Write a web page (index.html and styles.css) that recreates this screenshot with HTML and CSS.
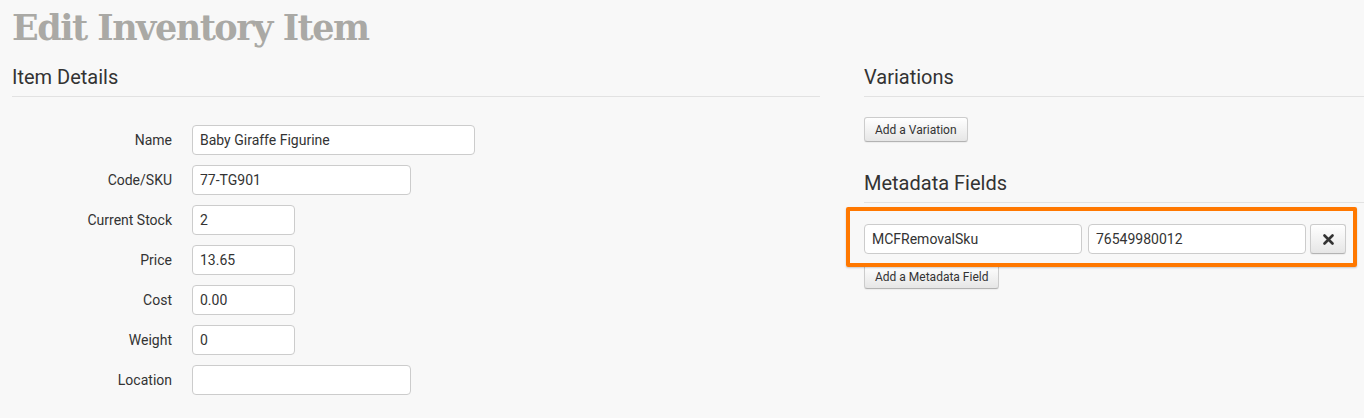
FILE: index.html
```html
<!DOCTYPE html>
<html lang="en">
<head>
<meta charset="UTF-8">
<title>Edit Inventory Item</title>
<link rel="stylesheet" href="styles.css">
</head>
<body>

<h1 class="page-title">Edit Inventory Item</h1>

<div class="columns">
    <!-- Item details -->
    <div class="col">
        <h3 class="section-header">Item Details</h3>
        <div class="form">
            <div class="form-row">
                <label>Name</label>
                <input type="text" class="input w-lg" value="Baby Giraffe Figurine">
            </div>
            <div class="form-row">
                <label>Code/SKU</label>
                <input type="text" class="input w-md" value="77-TG901">
            </div>
            <div class="form-row">
                <label>Current Stock</label>
                <input type="text" class="input w-sm" value="2">
            </div>
            <div class="form-row">
                <label>Price</label>
                <input type="text" class="input w-sm" value="13.65">
            </div>
            <div class="form-row">
                <label>Cost</label>
                <input type="text" class="input w-sm" value="0.00">
            </div>
            <div class="form-row">
                <label>Weight</label>
                <input type="text" class="input w-sm" value="0">
            </div>
            <div class="form-row">
                <label>Location</label>
                <input type="text" class="input w-md" value="">
            </div>
        </div>
    </div>

    <!-- Variations + metadata -->
    <div class="col">
        <h3 class="section-header">Variations</h3>
        <button class="btn btn-first">Add a Variation</button>

        <h3 class="section-header meta-header">Metadata Fields</h3>
        <div class="meta-row highlighted">
            <input type="text" class="input meta-input" value="MCFRemovalSku">
            <input type="text" class="input meta-input" value="76549980012">
            <button class="btn btn-remove" title="Remove">
                <svg width="11" height="11" viewBox="0 0 11 11"><path d="M1.5 1.5 L9.5 9.5 M9.5 1.5 L1.5 9.5" stroke="#333" stroke-width="2.6" stroke-linecap="round"/></svg>
            </button>
        </div>
        <button class="btn">Add a Metadata Field</button>
    </div>
</div>

</body>
</html>
```

FILE: styles.css
```css
body {
    font-family: Roboto, "Liberation Sans", Arial, sans-serif;
    font-size: 14px;
    color: #333;
    margin: 0;
    padding: 0 0 0 12px;
    background-color: #f8f8f8;
    overflow: hidden;
}
.page-title {
    font-family: "DejaVu Serif", "Liberation Serif", serif;
    font-weight: bold;
    font-size: 35px;
    line-height: 40px;
    letter-spacing: -1.5px;
    color: #aaa9a5;
    margin: 8px 0 0 0;
}
.columns {
    display: grid;
    grid-template-columns: 808px 1fr;
    gap: 44px;
}
.section-header {
    font-size: 20px;
    font-weight: 400;
    line-height: 22px;
    color: #333;
    margin: 18px 0 0 0;
    padding-bottom: 8px;
    border-bottom: 1px solid #e2e2e2;
}
.form { padding-top: 28px; }
.form-row {
    display: flex;
    align-items: center;
    gap: 20px;
    margin-bottom: 10px;
}
.form-row label {
    width: 160px;
    text-align: right;
}
.input {
    box-sizing: border-box;
    height: 30px;
    padding: 4px 7px;
    font-family: inherit;
    font-size: 14px;
    color: #333;
    background: #fff;
    border: 1px solid #ccc;
    border-radius: 4px;
    margin: 0;
}
.w-lg { width: 283px; }
.w-md { width: 219px; }
.w-sm { width: 103px; }
.btn {
    display: block;
    box-sizing: border-box;
    height: 25px;
    padding: 0 10px;
    font-family: inherit;
    font-size: 12px;
    color: #333;
    background: linear-gradient(#fff, #e6e6e6);
    border: 1px solid #ccc;
    border-bottom-color: #b3b3b3;
    border-radius: 3px;
    box-shadow: 0 1px 1px rgba(0,0,0,0.05);
}
.btn-first { margin-top: 20px; }
.meta-header { margin-top: 30px; }
.meta-row {
    position: relative;
    display: flex;
    align-items: center;
    width: 482px;
    margin-top: 21px;
}
.meta-input { width: 218px; margin-right: 6px; }
.meta-input + .meta-input { margin-right: 4px; }
.btn-remove {
    display: flex;
    align-items: center;
    justify-content: center;
    width: 36px;
    height: 30px;
    margin: 0;
    padding: 0;
}
/* screenshot annotation around the metadata row */
.highlighted::after {
    content: "";
    position: absolute;
    left: -18px;
    top: -17px;
    right: -11px;
    bottom: -13px;
    border: 4px solid #ff7800;
    border-radius: 2px;
    box-shadow: 0 1px 2px rgba(0,0,0,0.2);
    pointer-events: none;
}
.meta-row + .btn { margin-top: 10px; }
```
